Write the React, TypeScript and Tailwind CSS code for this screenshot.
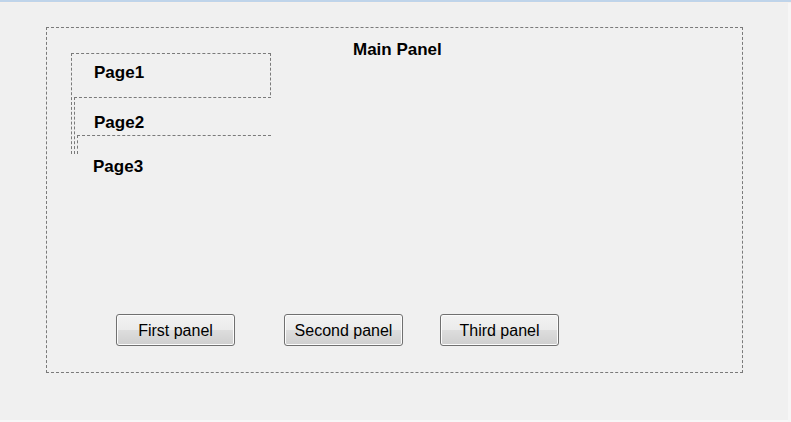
const FONT = { fontFamily: '"Liberation Sans", Arial, sans-serif' };

function WinButton({ label, className = "" }: { label: string; className?: string }) {
  return (
    <button
      className={`flex h-[32px] w-[119px] items-center justify-center rounded-[3px] border border-[#707070] bg-[linear-gradient(#f2f2f2_0%,#ebebeb_50%,#dddddd_51%,#cfcfcf_100%)] pt-[2px] text-[16px] text-black shadow-[inset_0_0_0_1px_#fcfcfc] ${className}`}
    >
      {label}
    </button>
  );
}

export default function App() {
  return (
    <div className="flex h-[422px] w-[791px] flex-col bg-[#f0f0f0]" style={FONT}>
      {/* window frame top */}
      <div className="h-[2px] flex-none bg-[#bfd4ea]" />
      <div className="h-[1px] flex-none bg-[#f5f0ec]" />

      <div className="flex flex-1">
        <div className="flex flex-1 flex-col">
          <div className="flex-1 pl-[46px] pt-[24px]">
            {/* main panel */}
            <div className="relative h-[346px] w-[697px] border border-dashed border-[#7a7a7a]">
              <div className="pl-[306px] pt-[12px] text-[17px] font-bold leading-[20px] text-black">
                Main Panel
              </div>

              {/* stacked pages */}
              <div className="absolute left-[24px] top-[25px] h-[101px] w-[200px] border-l border-r border-t border-dashed border-[#7a7a7a] bg-[#f0f0f0]">
                <div className="pl-[22px] pt-[9px] text-[17px] font-bold leading-[20px] text-black">Page1</div>
              </div>
              <div className="absolute left-[27px] top-[69px] h-[57px] w-[197px] border-l border-t border-dashed border-[#7a7a7a] bg-[#f0f0f0]">
                <div className="pl-[19px] pt-[15px] text-[17px] font-bold leading-[20px] text-black">Page2</div>
              </div>
              <div className="absolute left-[30px] top-[107px] h-[19px] w-[194px] border-l border-t border-dashed border-[#7a7a7a] bg-[#f0f0f0]" />
              <div className="absolute left-[46px] top-[129px] text-[17px] font-bold leading-[20px] text-black">Page3</div>

              <div className="absolute bottom-[26px] left-[69px] flex">
                <WinButton label="First panel" />
                <WinButton label="Second panel" className="ml-[49px]" />
                <WinButton label="Third panel" className="ml-[37px]" />
              </div>
            </div>
          </div>
          <div className="h-[2px] flex-none bg-[#f7f7f7]" />
        </div>
        <div className="w-[3px] flex-none bg-[#f6f6f6]" />
      </div>
    </div>
  );
}
